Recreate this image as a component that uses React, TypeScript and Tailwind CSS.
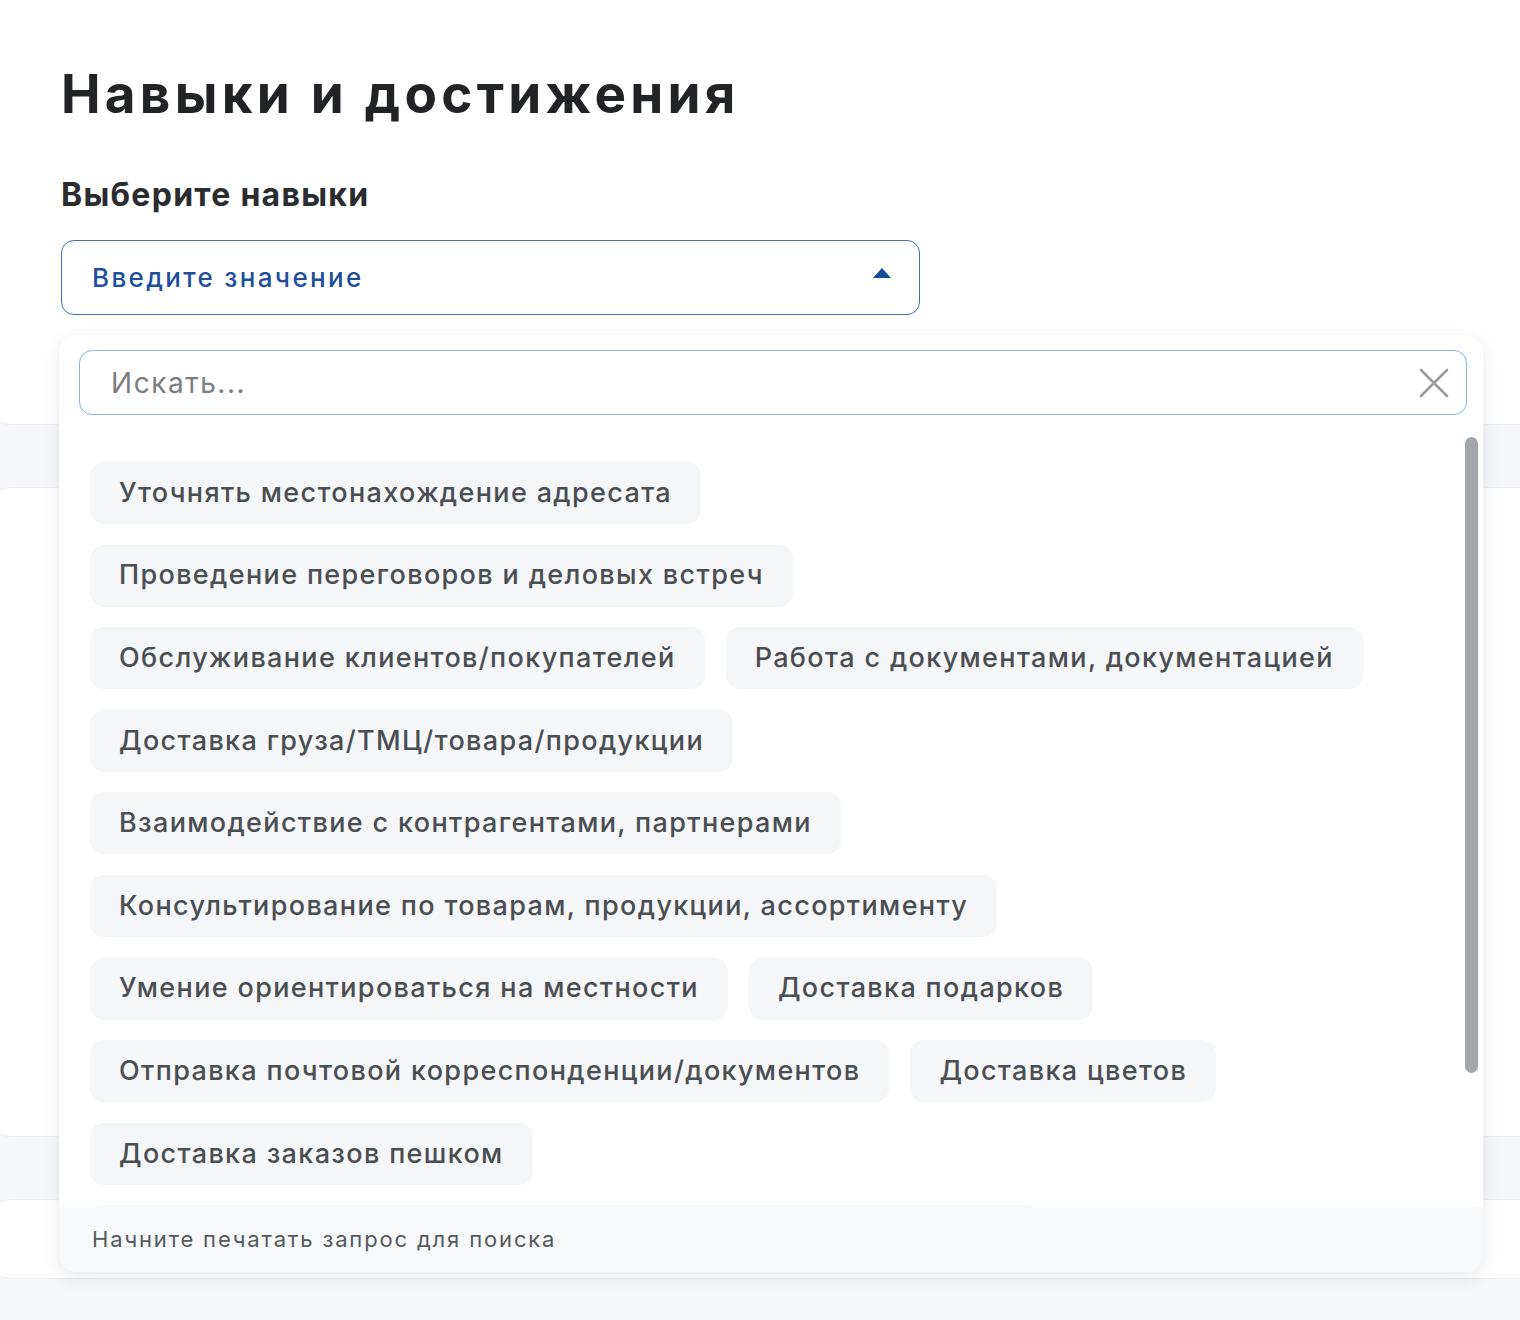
const rows: string[][] = [
  ["Уточнять местонахождение адресата"],
  ["Проведение переговоров и деловых встреч"],
  ["Обслуживание клиентов/покупателей", "Работа с документами, документацией"],
  ["Доставка груза/ТМЦ/товара/продукции"],
  ["Взаимодействие с контрагентами, партнерами"],
  ["Консультирование по товарам, продукции, ассортименту"],
  ["Умение ориентироваться на местности", "Доставка подарков"],
  ["Отправка почтовой корреспонденции/документов", "Доставка цветов"],
  ["Доставка заказов пешком"],
];

function Chip({ label }: { label: string }) {
  return (
    <button
      type="button"
      className="h-[62px] shrink-0 rounded-[14px] bg-[#f5f6f8] px-[29px] text-[27px] font-medium tracking-[0.05em] text-[#4a4d52]"
    >
      {label}
    </button>
  );
}

function ClearIcon() {
  return (
    <svg width="30" height="30" viewBox="0 0 30 30" fill="none" className="shrink-0">
      <path d="M2 2 L28 28 M28 2 L2 28" stroke="#9b9b9b" strokeWidth="2.6" strokeLinecap="round" />
    </svg>
  );
}

function SkillsDropdown() {
  return (
    <div className="absolute left-[59px] top-[335px] flex h-[937px] w-[1424px] flex-col overflow-hidden rounded-[18px] bg-white shadow-[0_6px_18px_rgba(30,40,60,0.10)]">
      <div className="pl-[20px] pr-[16px] pt-[15px]">
        <div className="flex h-[65px] items-center rounded-[13px] border-[1.5px] border-[#86b4e8] pl-[31px] pr-[17px]">
          <input
            placeholder="Искать..."
            className="flex-1 bg-transparent text-[28px] tracking-[0.055em] text-[#333] outline-none placeholder:text-[#7b7d80]"
          />
          <ClearIcon />
        </div>
      </div>

      <div className="relative flex-1 overflow-hidden">
        <div className="flex flex-col gap-[20.6px] pl-[31px] pt-[47px]">
          {rows.map((row, i) => (
            <div key={i} className="flex gap-[21px]">
              {row.map((label) => (
                <Chip key={label} label={label} />
              ))}
            </div>
          ))}
          {/* next item, scrolled under the footer */}
          <div className="h-[62px] w-[950px] rounded-[14px] bg-[#f5f6f8]" />
        </div>
        {/* scroll thumb */}
        <div className="absolute right-[5px] top-[22px] h-[636px] w-[13px] rounded-full bg-[#a3a6ab]" />
      </div>

      <div className="flex h-[65px] shrink-0 items-center bg-[#f7f8fa] px-[33px]">
        <p className="text-[22px] tracking-[0.084em] text-[#55585d]">Начните печатать запрос для поиска</p>
      </div>
    </div>
  );
}

export default function App() {
  return (
    <div className="relative h-[1320px] w-[1520px] overflow-hidden bg-[#f6f7f9] font-['Inter',sans-serif]">
      <div className="flex flex-col gap-[62px]">
        <section className="-ml-[10px] h-[425px] w-[1560px] rounded-b-[20px] border-b border-[#eceef1] bg-white pl-[71px] pt-[62px]">
          <h1 className="text-[53px] font-bold leading-[64px] tracking-[0.08em] text-[#222326]">
            Навыки и достижения
          </h1>
          <h2 className="mt-[49px] text-[32px] font-bold leading-[40px] tracking-[0.04em] text-[#2a2c30]">
            Выберите навыки
          </h2>
          <div className="mt-[25px] flex h-[75px] w-[859px] items-center justify-between rounded-[13px] border border-[#3f6fb3] pl-[30px] pr-[27px]">
            <span className="text-[26px] font-medium tracking-[0.09em] text-[#1d4f9c]">Введите значение</span>
            <svg width="20" height="12" viewBox="0 0 20 12" className="mb-[10px]">
              <path d="M10 1 L19 11 L1 11 Z" fill="#0f4b98" />
            </svg>
          </div>
        </section>
        <section className="-ml-[10px] h-[650px] w-[1560px] rounded-[20px] border-y border-[#eceef1] bg-white" />
        <section className="-ml-[10px] h-[80px] w-[1560px] rounded-[20px] border-y border-[#eceef1] bg-white" />
      </div>

      <SkillsDropdown />
    </div>
  );
}
